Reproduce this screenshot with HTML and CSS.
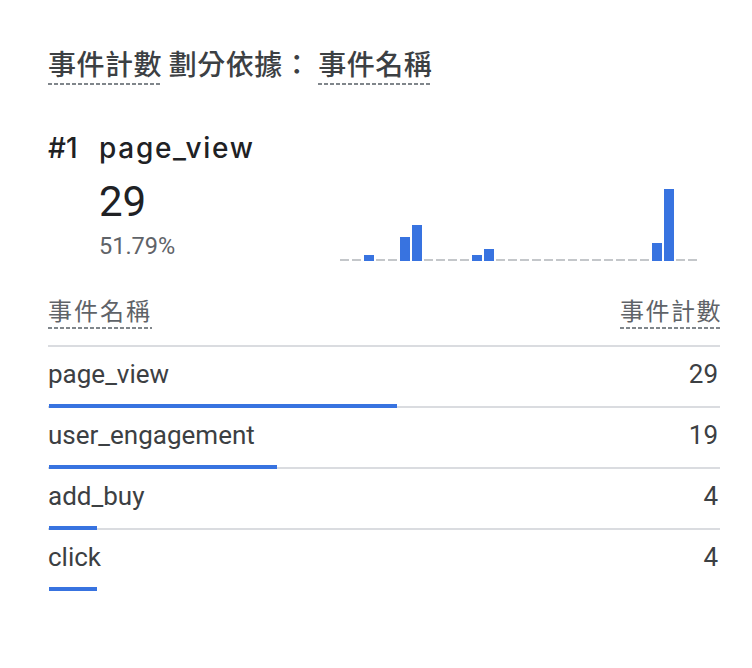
FILE: index.html
```html
<!DOCTYPE html>
<html lang="zh-Hant">
<head>
<meta charset="utf-8">
<title>事件計數</title>
<link rel="stylesheet" href="styles.css">
</head>
<body>
<div class="card">
  <h2 class="title"><span class="dotted">事件計數</span> 劃分依據： <span class="dotted">事件名稱</span></h2>

  <div class="top">
    <div class="rank">#1</div>
    <div class="top-main">
      <div class="top-name">page_view</div>
      <div class="top-body">
        <div class="stats">
          <div class="big">29</div>
          <div class="pct">51.79%</div>
        </div>
        <div class="spark">
          <div class="slot"><i class="dash"></i></div>
          <div class="slot"><i class="dash"></i></div>
          <div class="slot"><i class="bar" style="height:6px"></i></div>
          <div class="slot"><i class="dash"></i></div>
          <div class="slot"><i class="dash"></i></div>
          <div class="slot"><i class="bar" style="height:24px"></i></div>
          <div class="slot"><i class="bar" style="height:36px"></i></div>
          <div class="slot"><i class="dash"></i></div>
          <div class="slot"><i class="dash"></i></div>
          <div class="slot"><i class="dash"></i></div>
          <div class="slot"><i class="dash"></i></div>
          <div class="slot"><i class="bar" style="height:6px"></i></div>
          <div class="slot"><i class="bar" style="height:12px"></i></div>
          <div class="slot"><i class="dash"></i></div>
          <div class="slot"><i class="dash"></i></div>
          <div class="slot"><i class="dash"></i></div>
          <div class="slot"><i class="dash"></i></div>
          <div class="slot"><i class="dash"></i></div>
          <div class="slot"><i class="dash"></i></div>
          <div class="slot"><i class="dash"></i></div>
          <div class="slot"><i class="dash"></i></div>
          <div class="slot"><i class="dash"></i></div>
          <div class="slot"><i class="dash"></i></div>
          <div class="slot"><i class="dash"></i></div>
          <div class="slot"><i class="dash"></i></div>
          <div class="slot"><i class="dash"></i></div>
          <div class="slot"><i class="bar" style="height:18px"></i></div>
          <div class="slot"><i class="bar" style="height:72px"></i></div>
          <div class="slot"><i class="dash"></i></div>
          <div class="slot"><i class="dash"></i></div>
        </div>
      </div>
    </div>
  </div>

  <div class="table">
    <div class="thead">
      <span class="dotted head-label">事件名稱</span>
      <span class="dotted head-label">事件計數</span>
    </div>
    <div class="row">
      <div class="row-line"><span class="name">page_view</span><span class="num">29</span></div>
      <div class="track"><div class="fill" style="width:51.79%"></div></div>
    </div>
    <div class="row">
      <div class="row-line"><span class="name">user_engagement</span><span class="num">19</span></div>
      <div class="track"><div class="fill" style="width:33.93%"></div></div>
    </div>
    <div class="row">
      <div class="row-line"><span class="name">add_buy</span><span class="num">4</span></div>
      <div class="track"><div class="fill" style="width:7.14%"></div></div>
    </div>
    <div class="row">
      <div class="row-line"><span class="name">click</span><span class="num">4</span></div>
      <div class="track"><div class="fill" style="width:7.14%"></div></div>
    </div>
  </div>
</div>
</body>
</html>
```

FILE: styles.css
```css
* { box-sizing: border-box; }

html, body {
  margin: 0;
  padding: 0;
  background: #ffffff;
}

.card {
  width: 752px;
  min-height: 668px;
  padding: 43px 32px 0 48px;
  border-top-left-radius: 10px;
  font-family: Roboto, "Noto Sans CJK TC", sans-serif;
  color: #3c4043;
}

.title {
  margin: 0;
  font-family: "Noto Sans CJK TC", sans-serif;
  font-size: 28px;
  font-weight: 500;
  line-height: 40px;
  letter-spacing: 0.5px;
  color: #3c4043;
}

.dotted {
  background-image: linear-gradient(to right, #80868b 4px, transparent 4px);
  background-size: 6px 2px;
  background-repeat: repeat-x;
  background-position: left 0 bottom 0;
  padding-bottom: 2px;
}

/* top item */
.top {
  display: flex;
  margin-top: 47px;
}

.rank {
  width: 51px;
  flex: none;
  font-family: Inter, sans-serif;
  font-size: 28px;
  font-weight: 500;
  line-height: 36px;
  color: #202124;
}

.top-main {
  flex: 1;
  display: flex;
  flex-direction: column;
}

.top-name {
  font-family: Inter, sans-serif;
  font-size: 28px;
  font-weight: 500;
  line-height: 36px;
  letter-spacing: 1.7px;
  color: #202124;
}

.top-body {
  display: flex;
  justify-content: space-between;
  align-items: flex-end;
  padding-right: 20px;
}

.stats {
  display: flex;
  flex-direction: column;
  padding-top: 12px;
}

.big {
  font-family: Roboto, sans-serif;
  font-size: 42px;
  line-height: 48px;
  color: #202124;
}

.pct {
  margin-top: 5px;
  font-family: Roboto, sans-serif;
  font-size: 23.5px;
  line-height: 30px;
  color: #5f6368;
}

.spark {
  display: flex;
  align-items: flex-end;
  height: 80px;
}

.slot {
  width: 12px;
  display: flex;
  align-items: flex-end;
}

.dash {
  display: block;
  width: 9px;
  height: 2px;
  background: #c4c7ca;
}

.bar {
  display: block;
  width: 10px;
  background: #3873e0;
}

/* table */
.table {
  margin-top: 33px;
}

.thead {
  display: flex;
  justify-content: space-between;
  align-items: flex-end;
  padding-bottom: 16px;
  border-bottom: 2px solid #dadce0;
}

.head-label {
  font-family: "Noto Sans CJK TC", sans-serif;
  font-size: 24px;
  line-height: 32px;
  letter-spacing: 2px;
  color: #5f6368;
  padding-bottom: 3px;
}

.head-label:last-child {
  letter-spacing: 1.5px;
  margin-right: -2px;
}

.row {
  padding-top: 12px;
}

.row-line {
  display: flex;
  justify-content: space-between;
  font-family: Roboto, sans-serif;
  font-size: 26px;
  line-height: 30px;
  color: #3c4043;
}

.num {
  padding-right: 2px;
}

.track {
  margin-top: 15px;
  height: 4px;
  background: linear-gradient(to top, #dadce0 2px, transparent 2px);
}

.row:last-child .track {
  background: none;
}

.fill {
  height: 4px;
  margin-left: 1px;
  background: #3873e0;
}
```
